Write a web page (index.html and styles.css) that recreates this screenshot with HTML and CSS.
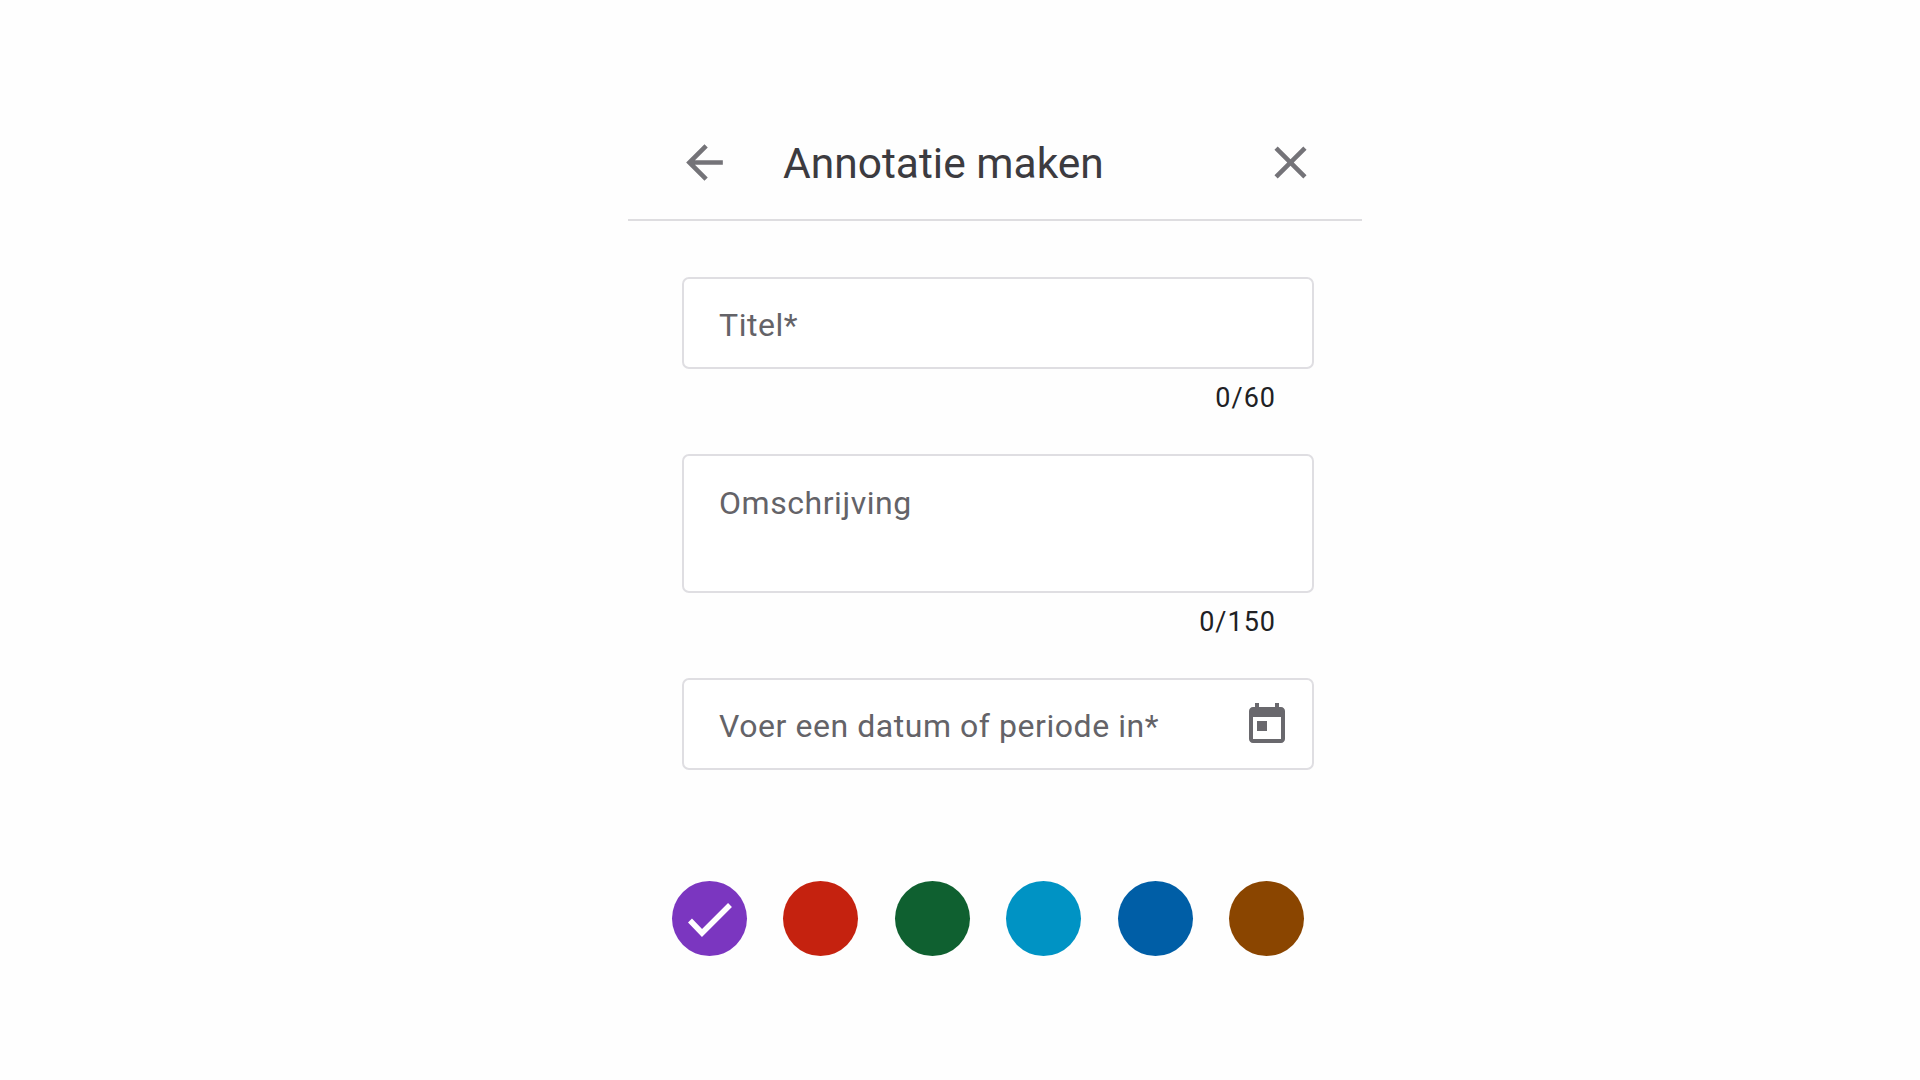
FILE: index.html
```html
<!DOCTYPE html>
<html lang="nl">
<head>
<meta charset="utf-8">
<title>Annotatie maken</title>
<link rel="stylesheet" href="styles.css">
</head>
<body>
<main class="panel">
  <header class="header">
    <svg class="icon" viewBox="0 0 24 24"><path d="M20 11H7.830l5.590-5.590L12 4l-8 8 8 8 1.410-1.410L7.830 13H20v-2z"/></svg>
    <h1 class="title">Annotatie maken</h1>
    <svg class="icon" viewBox="0 0 24 24"><path d="M19 6.410L17.590 5 12 10.590 6.410 5 5 6.410 10.590 12 5 17.590 6.410 19 12 13.410 17.590 19 19 17.590 13.410 12z"/></svg>
  </header>
  <form class="form">
    <div class="field field-line">Titel*</div>
    <div class="counter">0/60</div>
    <div class="field field-area">Omschrijving</div>
    <div class="counter">0/150</div>
    <div class="field field-line field-date">
      <span>Voer een datum of periode in*</span>
      <svg class="calendar" viewBox="0 0 24 24"><path d="M19 3h-1V1h-2v2H8V1H6v2H5c-1.110 0-1.990.9-1.990 2L3 19c0 1.100.89 2 2 2h14c1.100 0 2-.9 2-2V5c0-1.100-.9-2-2-2zm0 16H5V8h14v11zM7 10h5v5H7z"/></svg>
    </div>
    <div class="swatches">
      <div class="swatch purple">
        <svg class="check" viewBox="0 0 75 75"><path d="M18 39.500 30 52 58 24"/></svg>
      </div>
      <div class="swatch red"></div>
      <div class="swatch green"></div>
      <div class="swatch cyan"></div>
      <div class="swatch blue"></div>
      <div class="swatch brown"></div>
    </div>
  </form>
</main>
</body>
</html>
```
FILE: styles.css
```css
* { box-sizing: border-box; }
html, body { margin: 0; height: 100%; }
body {
  background: #fefefe;
  font-family: Roboto, "Liberation Sans", sans-serif;
  overflow: hidden;
}
.panel { width: 734px; margin-left: 628px; padding-top: 135px; }
.header {
  height: 86px;
  padding: 0 44px 0 49px;
  display: flex;
  align-items: flex-start;
  border-bottom: 2px solid #dedde0;
}
.icon { width: 55px; height: 55px; fill: #747378; flex: none; }
.title {
  flex: 1;
  margin: 1px 0 0 51px;
  font-size: 42.500px;
  line-height: 55px;
  font-weight: 400;
  color: #3c3b40;
  white-space: nowrap;
}
.form { margin: 56px 0 0 54px; width: 632px; }
.field {
  border: 2.500px solid #dfdee2;
  border-radius: 7px;
  padding: 0 35px;
  background: #fff;
  font-size: 32px;
  letter-spacing: 0.55px;
  color: #646368;
}
.field-line {
  height: 92px;
  display: flex;
  align-items: center;
  padding-top: 4px;
}
.field-area { height: 139px; padding-top: 26px; line-height: 42px; }
.field-date { justify-content: space-between; padding-right: 21px; padding-top: 0; }
.field-date span { margin-top: 3px; }
.calendar { width: 48px; height: 48px; margin-top: 2px; fill: #69686d; flex: none; }
.counter {
  height: 85px;
  padding: 11px 38px 0 0;
  text-align: right;
  font-size: 27px;
  line-height: 36px;
  letter-spacing: 1px;
  color: #202124;
}
.swatches { display: flex; gap: 36.400px; margin: 111px 0 0 -10px; }
.swatch { width: 75px; height: 75px; border-radius: 50%; flex: none; }
.check { width: 75px; height: 75px; display: block; fill: none; stroke: #fff; stroke-width: 5.500; }
.purple { background: #7b36c0; }
.red { background: #c5220f; }
.green { background: #0f6030; }
.cyan { background: #0093c4; }
.blue { background: #005ea6; }
.brown { background: #8a4500; }
```
